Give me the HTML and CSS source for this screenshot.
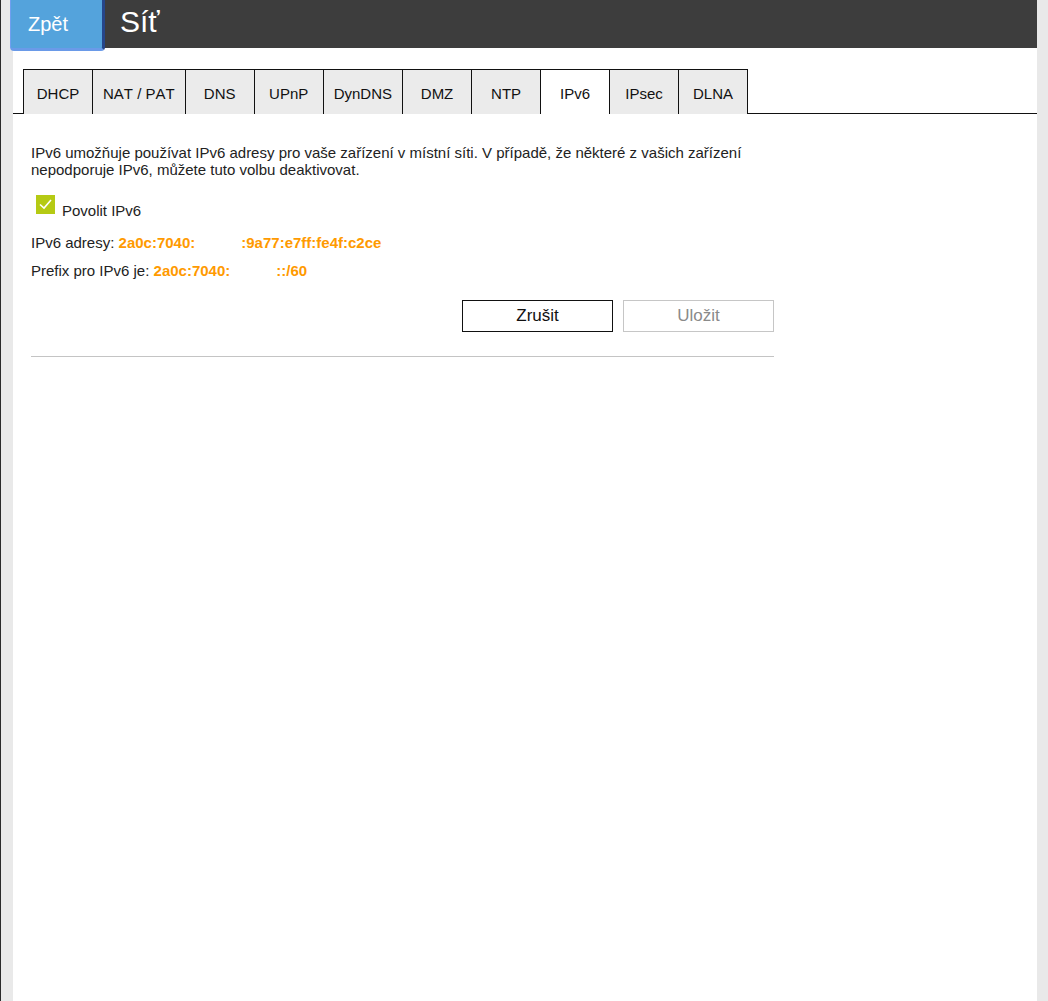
FILE: index.html
```html
<!DOCTYPE html>
<html lang="cs">
  <head>
    <meta charset="UTF-8" />
    <meta name="viewport" content="width=device-width, initial-scale=1.0" />
    <title>Síť</title>
    <link rel="stylesheet" href="styles.css">
  </head>
  <body>
    <div class="panel">
      <!-- header -->
      <div class="header">
        <button class="back">Zpět</button>
        <h1 class="title">Síť</h1>
      </div>

      <!-- tabs -->
      <div class="tabs">
        <div class="tab">DHCP</div>
        <div class="tab">NAT / PAT</div>
        <div class="tab">DNS</div>
        <div class="tab">UPnP</div>
        <div class="tab">DynDNS</div>
        <div class="tab">DMZ</div>
        <div class="tab">NTP</div>
        <div class="tab active">IPv6</div>
        <div class="tab">IPsec</div>
        <div class="tab last">DLNA</div>
      </div>

      <!-- content -->
      <div class="content">
        <p class="intro">
          IPv6 umožňuje používat IPv6 adresy pro vaše zařízení v místní síti. V případě, že některé z vašich zařízení
          nepodporuje IPv6, můžete tuto volbu deaktivovat.
        </p>

        <div class="check-row">
          <span class="checkbox">
            <svg width="19" height="19" viewBox="0 0 19 19">
              <path d="M4 9.5 L8 13 L15 5" fill="none" stroke="#fff" stroke-width="1.6" />
            </svg>
          </span>
          <span class="check-label">Povolit IPv6</span>
        </div>

        <div class="info">IPv6 adresy: <span class="value">2a0c:7040:<span class="hidden-part"></span>:9a77:e7ff:fe4f:c2ce</span></div>
        <div class="info">Prefix pro IPv6 je: <span class="value">2a0c:7040:<span class="hidden-part"></span>::/60</span></div>

        <div class="actions">
          <button class="btn">Zrušit</button>
          <button class="btn disabled">Uložit</button>
        </div>

        <hr class="divider" />
      </div>
    </div>
  </body>
</html>
```

FILE: styles.css
```css
body {
  margin: 0;
  background: #e9e9e9;
  border-left: 1px solid #2a2a2a;
  font-family: "Liberation Sans", Arial, sans-serif;
  font-kerning: none;
  color: #222;
}
.panel {
  margin: 0 11px 0 12px;
  background: #fff;
  min-height: 1001px;
}
.header {
  display: flex;
  align-items: flex-start;
  height: 48px;
  background: #3d3d3d;
}
.back {
  margin-left: -3px;
  width: 95px;
  height: 51px;
  padding: 0 0 0 17px;
  text-align: left;
  background: #54a3dc;
  color: #fff;
  font-family: inherit;
  font-size: 20px;
  border: none;
  border-left: 1px solid #6f9ff0;
  border-right: 3px solid #26468a;
  border-bottom: 3px solid #6a9ae8;
  border-radius: 0 0 4px 4px;
  cursor: pointer;
}
.title {
  margin: 0 0 0 15px;
  font-size: 30px;
  font-weight: normal;
  color: #fff;
  line-height: 44px;
}
.tabs {
  display: flex;
  margin-top: 21px;
  padding-left: 10px;
  border-bottom: 1px solid #111;
}
.tab {
  box-sizing: border-box;
  min-width: 69px;
  height: 45px;
  margin-bottom: -1px;
  padding: 2px 10px 0;
  background: #ebebeb;
  border-top: 1px solid #111;
  border-left: 1px solid #111;
  font-size: 15px;
  color: #111;
  display: flex;
  align-items: center;
  justify-content: center;
}
.tab.last {
  border-right: 1px solid #111;
  min-width: 70px;
}
.tab.active {
  background: #fff;
}
.content {
  margin-left: 18px;
  width: 743px;
}
.intro {
  margin: 30px 0 0;
  font-size: 15px;
  line-height: 17px;
}
.check-row {
  display: flex;
  align-items: flex-start;
  margin-top: 17px;
}
.checkbox {
  width: 19px;
  height: 19px;
  margin-left: 5px;
  background: #b5ca14;
  display: flex;
}
.check-label {
  margin: 7px 0 0 7px;
  font-size: 15px;
  line-height: 17px;
}
.info {
  margin-top: 11px;
  font-size: 15px;
  line-height: 17px;
}
.check-row + .info {
  margin-top: 15px;
}
.value {
  color: #ff9a00;
  font-weight: bold;
}
.hidden-part {
  display: inline-block;
  width: 46px;
}
.actions {
  display: flex;
  justify-content: flex-end;
  gap: 10px;
  margin-top: 21px;
}
.btn {
  width: 151px;
  height: 32px;
  background: #fff;
  border: 1px solid #111;
  font-family: inherit;
  font-size: 17px;
  color: #111;
  cursor: pointer;
}
.btn.disabled {
  border-color: #c6c6c6;
  color: #8a8a8a;
  cursor: default;
}
.divider {
  margin: 24px 0 0;
  border: none;
  border-top: 1px solid #c4c4c4;
}
```
